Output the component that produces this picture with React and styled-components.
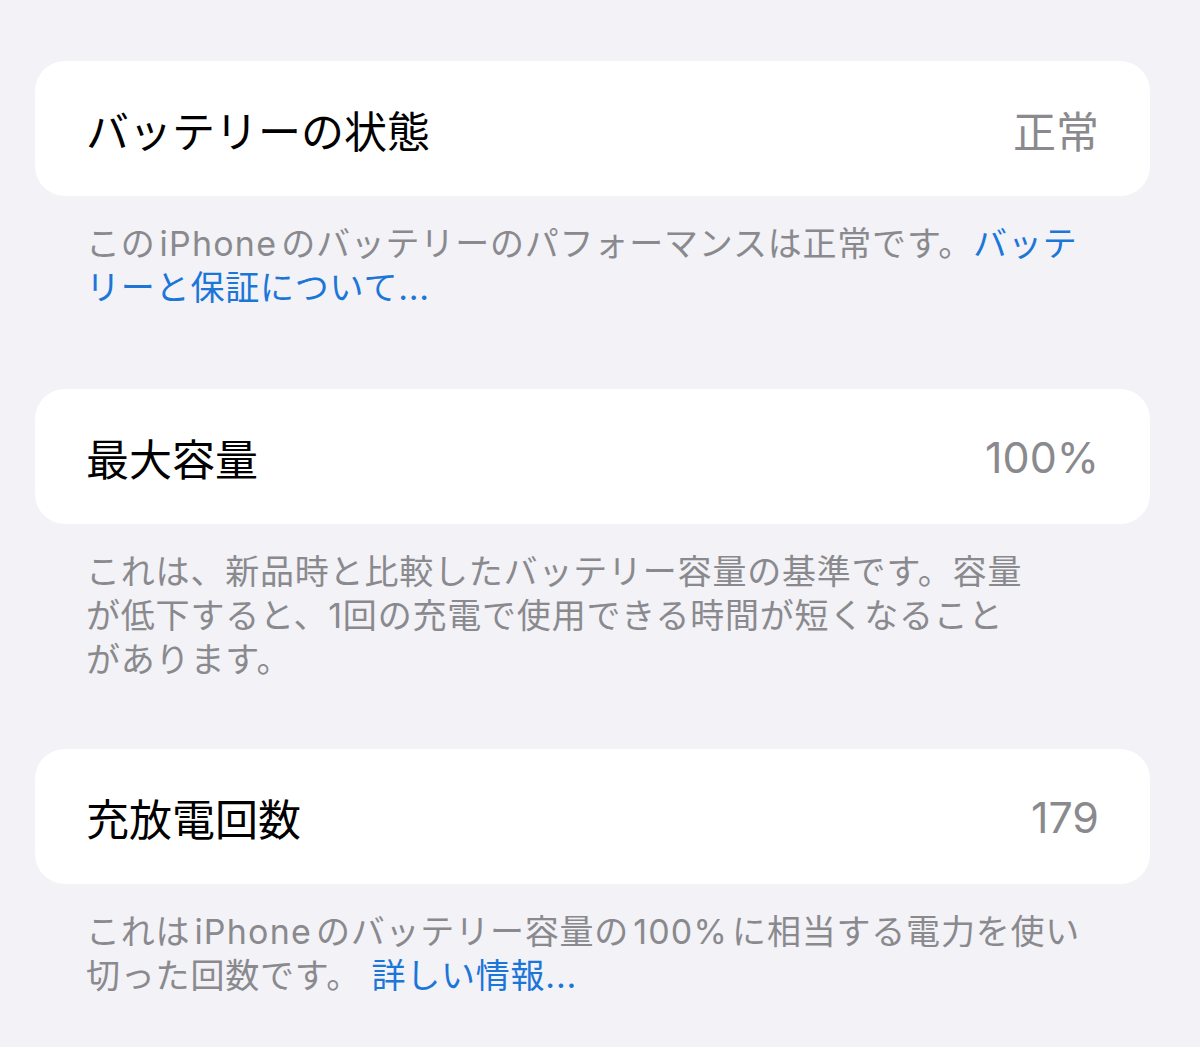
import styled, { createGlobalStyle } from "styled-components";

const GlobalStyle = createGlobalStyle`
    html, body {
        margin: 0;
        padding: 0;
        background: #f2f2f7;
    }
    body {
        font-family: "Inter", "Noto Sans CJK JP", sans-serif;
        -webkit-font-smoothing: antialiased;
    }
`;

const Page = styled.div`
    width: 1200px;
    height: 1047px;
    box-sizing: border-box;
    padding: 61px 50px 0 35px;
    background: #f2f2f7;
    overflow: hidden;
`;

const Section = styled.section`
    margin-bottom: ${(p) => p.$after || 0}px;
`;

const Card = styled.div`
    height: 135px;
    box-sizing: border-box;
    padding: 0 51px;
    background: #ffffff;
    border-radius: 30px;
    display: flex;
    align-items: center;
    justify-content: space-between;
    font-size: 43px;
`;

const Label = styled.span`
    color: #000000;
`;

const Value = styled.span`
    color: #8a8a8e;
`;

const Footer = styled.p`
    margin: 0;
    padding: 26px 51px 0;
    font-size: 34px;
    line-height: 44px;
    letter-spacing: 0.8px;
    color: #8a8a8e;
    white-space: nowrap;
`;

const Latin = styled.span`
    margin: 0 4px;
    letter-spacing: 1.2px;
`;

const Link = styled.span`
    color: #1c76d8;
`;

export default function App() {
    return <>
        <GlobalStyle />
        <Page>
            <Section $after={79}>
                <Card>
                    <Label>バッテリーの状態</Label>
                    <Value>正常</Value>
                </Card>
                <Footer>
                    この<Latin>iPhone</Latin>のバッテリーのパフォーマンスは正常です。<Link>バッテ<br />リーと保証について...</Link>
                </Footer>
            </Section>
            <Section $after={67}>
                <Card>
                    <Label>最大容量</Label>
                    <Value>100%</Value>
                </Card>
                <Footer>
                    これは、新品時と比較したバッテリー容量の基準です。容量<br />
                    が低下すると、1回の充電で使用できる時間が短くなること<br />
                    があります。
                </Footer>
            </Section>
            <Section>
                <Card>
                    <Label>充放電回数</Label>
                    <Value>179</Value>
                </Card>
                <Footer>
                    これは<Latin>iPhone</Latin>のバッテリー容量の<Latin>100%</Latin>に相当する電力を使い<br />
                    切った回数です。 <Link>詳しい情報...</Link>
                </Footer>
            </Section>
        </Page>
    </>;
}
